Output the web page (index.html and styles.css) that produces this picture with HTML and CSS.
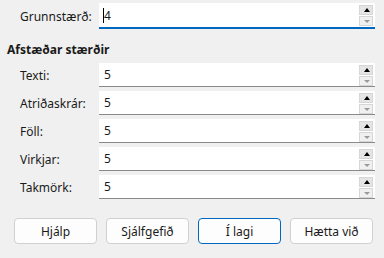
FILE: index.html
```html
<!DOCTYPE html>
<html lang="is">

<head>
  <meta charset="UTF-8" />
  <meta name="viewport" content="width=device-width, initial-scale=1.0" />
  <title>Leturstærðir</title>
  <link rel="stylesheet" href="styles.css">
</head>

<body>
  <div class="dialog">
    <div class="row row-base">
      <label>Grunnstærð:</label>
      <div class="spin focused">
        <span class="value"><i class="caret"></i>4</span>
        <div class="spin-btns">
          <span class="up"></span>
          <span class="down"></span>
        </div>
      </div>
    </div>

    <h4 class="group-title">Afstæðar stærðir</h4>

    <div class="row">
      <label>Texti:</label>
      <div class="spin">
        <span class="value">5</span>
        <div class="spin-btns"><span class="up"></span><span class="down"></span></div>
      </div>
    </div>
    <div class="row">
      <label>Atriðaskrár:</label>
      <div class="spin">
        <span class="value">5</span>
        <div class="spin-btns"><span class="up"></span><span class="down"></span></div>
      </div>
    </div>
    <div class="row">
      <label>Föll:</label>
      <div class="spin">
        <span class="value">5</span>
        <div class="spin-btns"><span class="up"></span><span class="down"></span></div>
      </div>
    </div>
    <div class="row">
      <label>Virkjar:</label>
      <div class="spin">
        <span class="value">5</span>
        <div class="spin-btns"><span class="up"></span><span class="down"></span></div>
      </div>
    </div>
    <div class="row">
      <label>Takmörk:</label>
      <div class="spin">
        <span class="value">5</span>
        <div class="spin-btns"><span class="up"></span><span class="down"></span></div>
      </div>
    </div>

    <div class="buttons">
      <button>Hjálp</button>
      <button>Sjálfgefið</button>
      <button class="default">Í lagi</button>
      <button>Hætta við</button>
    </div>
  </div>
</body>

</html>
```

FILE: styles.css
```css
* {
  box-sizing: border-box;
}

body {
  margin: 0;
  background: #f0f0f0;
  font-family: "Noto Sans", "Open Sans", sans-serif;
  font-size: 12px;
  color: #1a1a1a;
}

.dialog {
  width: 384px;
  height: 258px;
  padding: 3px 9px 0 7px;
}

.row {
  display: grid;
  grid-template-columns: 92px 1fr;
  align-items: center;
  height: 22px;
  margin-bottom: 6px;
}

.row label {
  padding-left: 13px;
}

.row-base {
  height: 26px;
  margin-bottom: 0;
}

.group-title {
  margin: 13px 0 5px 0;
  font-size: 12px;
  font-weight: bold;
  height: 16px;
  line-height: 16px;
}

.spin {
  height: 100%;
  background: #fff;
  border-bottom: 1px solid #8a8a8a;
  display: flex;
  align-items: center;
  justify-content: space-between;
  padding: 0 2px 0 5px;
}

.spin.focused {
  border-bottom: 2px solid #0067c0;
}

.value {
  position: relative;
}

.caret {
  position: absolute;
  left: -1px;
  top: 1px;
  width: 1px;
  height: 15px;
  background: #000;
}

.spin-btns {
  display: flex;
  flex-direction: column;
  gap: 1px;
  align-self: flex-start;
  padding-top: 2px;
}

.spin-btns span {
  width: 14px;
  height: 10px;
  background: #e5e5e5;
  border: 1px solid #d6d6d6;
  position: relative;
}

.spin-btns span::after {
  content: "";
  position: absolute;
  left: 4px;
  top: 2px;
  border-left: 3px solid transparent;
  border-right: 3px solid transparent;
}

.spin-btns .up::after {
  border-bottom: 4px solid #000;
}

.spin-btns .down {
  background: #f0f0f0;
}

.spin-btns .down::after {
  top: 3px;
  border-top: 3px solid #9a9a9a;
}

.buttons {
  display: flex;
  gap: 9px;
  margin-top: 21px;
  padding-left: 7px;
}

.buttons button {
  width: 83px;
  height: 26px;
  appearance: none;
  background: #fdfdfd;
  border: 1px solid #d0d0d0;
  border-radius: 4px;
  font-family: inherit;
  font-size: 12px;
  color: #1a1a1a;
}

.buttons button.default {
  border-color: #0067c0;
}
```
